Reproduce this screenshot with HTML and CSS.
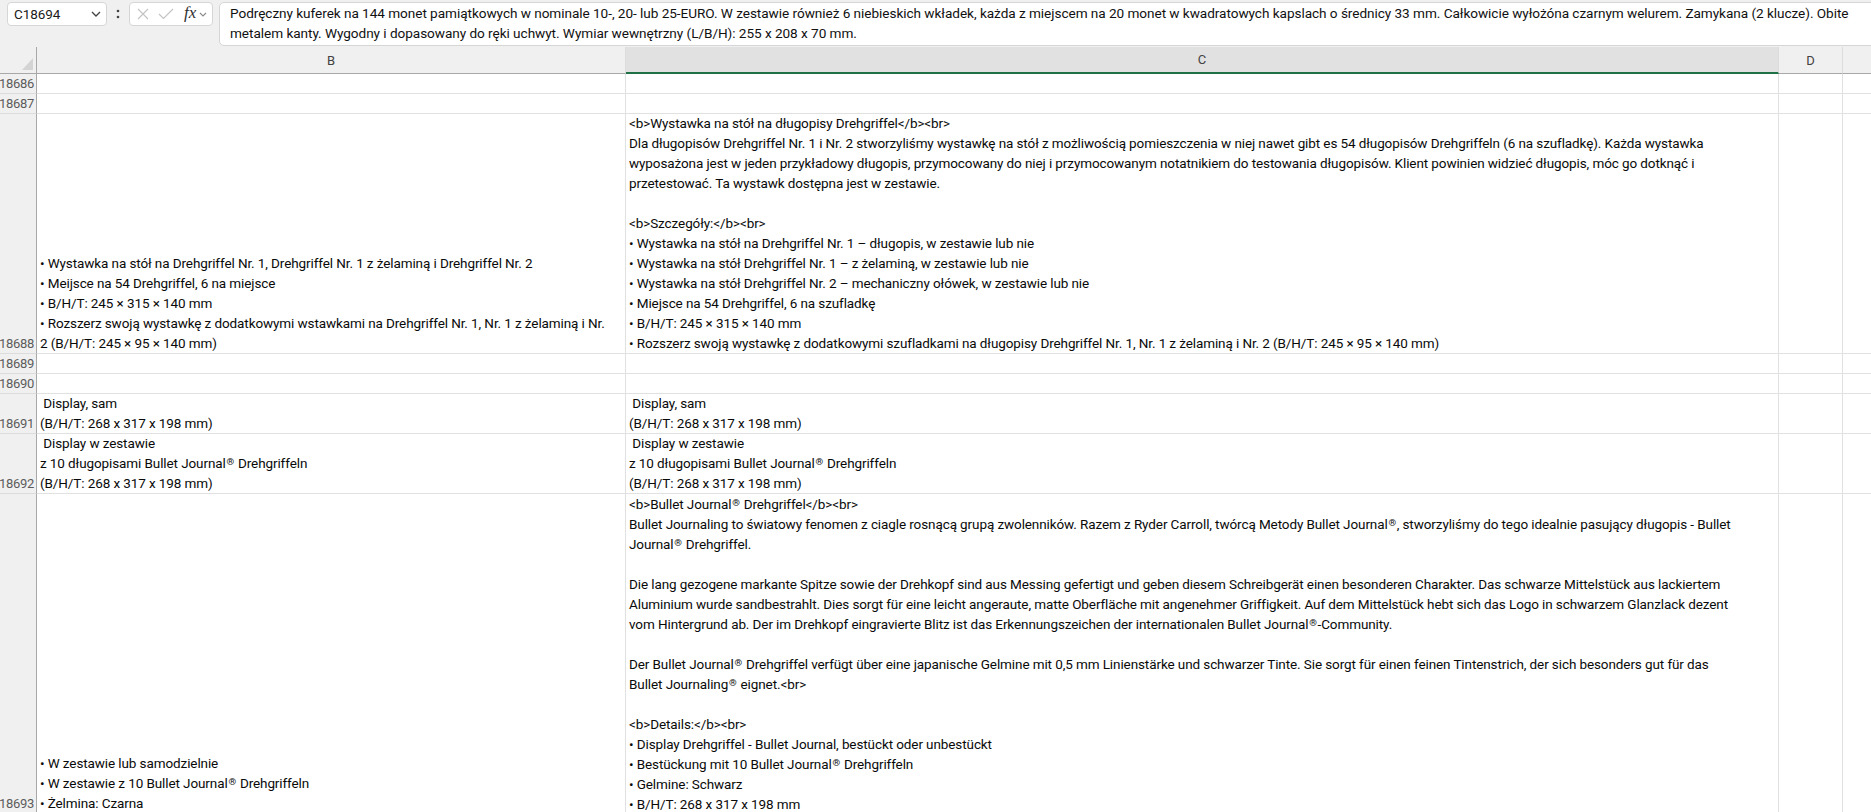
FILE: index.html
```html
<!DOCTYPE html>
<html lang="pl">
<head>
<meta charset="utf-8">
<title>Arkusz</title>
<link rel="stylesheet" href="styles.css">
</head>
<body>
<div class="app">
  <div class="topbar">
    <div class="namebox">
      <span class="nb-text">C18694</span>
      <svg class="nb-chev" width="10" height="6" viewBox="0 0 10 6"><polyline points="1,1 5,5 9,1" fill="none" stroke="#424242" stroke-width="1.3"/></svg>
    </div>
    <div class="splitter">
      <svg width="4" height="14" viewBox="0 0 4 14"><circle cx="2" cy="4" r="1.3" fill="#424242"/><circle cx="2" cy="10" r="1.3" fill="#424242"/></svg>
    </div>
    <div class="fbtns">
      <svg class="ic-x" width="12" height="12" viewBox="0 0 12 12"><path d="M1 1 L11 11 M11 1 L1 11" stroke="#c4c4c4" stroke-width="1.2" fill="none"/></svg>
      <svg class="ic-ok" width="16" height="12" viewBox="0 0 16 12"><polyline points="1,6 5.5,10.5 15,1" fill="none" stroke="#c4c4c4" stroke-width="1.2"/></svg>
      <span class="fx">fx</span>
      <svg class="fx-chev" width="8" height="5" viewBox="0 0 8 5"><polyline points="1,1 4,4 7,1" fill="none" stroke="#8a8a8a" stroke-width="1.1"/></svg>
    </div>
    <div class="formula">
      <div class="fline">Podręczny kuferek na 144 monet pamiątkowych w nominale 10-, 20- lub 25-EURO. W zestawie również 6 niebieskich wkładek, każda z miejscem na 20 monet w kwadratowych kapslach o średnicy 33 mm. Całkowicie wyłożóna czarnym welurem. Zamykana (2 klucze). Obite</div>
      <div class="fline">metalem kanty. Wygodny i dopasowany do ręki uchwyt. Wymiar wewnętrzny (L/B/H): 255 x 208 x 70 mm.</div>
    </div>
  </div>

  <div class="sheet">
    <!-- header row -->
    <div class="corner"><span class="tri"></span></div>
    <div class="ch">B</div>
    <div class="ch ch-sel">C</div>
    <div class="ch">D</div>
    <div class="ch"></div>

    <!-- 18686 -->
    <div class="rh">18686</div>
    <div class="c"></div><div class="c"></div><div class="c"></div><div class="c"></div>

    <!-- 18687 -->
    <div class="rh">18687</div>
    <div class="c"></div><div class="c"></div><div class="c"></div><div class="c"></div>

    <!-- 18688 -->
    <div class="rh">18688</div>
    <div class="c"><div class="t">
      <div class="l">• Wystawka na stół na Drehgriffel Nr. 1, Drehgriffel Nr. 1 z żelaminą i Drehgriffel Nr. 2</div>
      <div class="l">• Meijsce na 54 Drehgriffel, 6 na miejsce</div>
      <div class="l">• B/H/T: 245 × 315 × 140 mm</div>
      <div class="l">• Rozszerz swoją wystawkę z dodatkowymi wstawkami na Drehgriffel Nr. 1, Nr. 1 z żelaminą i Nr.</div>
      <div class="l">2 (B/H/T: 245 × 95 × 140 mm)</div>
    </div></div>
    <div class="c"><div class="t">
      <div class="l">&lt;b&gt;Wystawka na stół na długopisy Drehgriffel&lt;/b&gt;&lt;br&gt;</div>
      <div class="l">Dla długopisów Drehgriffel Nr. 1 i Nr. 2 stworzyliśmy wystawkę na stół z możliwością pomieszczenia w niej nawet gibt es 54 długopisów Drehgriffeln (6 na szufladkę). Każda wystawka</div>
      <div class="l">wyposażona jest w jeden przykładowy długopis, przymocowany do niej i przymocowanym notatnikiem do testowania długopisów. Klient powinien widzieć długopis, móc go dotknąć i</div>
      <div class="l">przetestować. Ta wystawk dostępna jest w zestawie.</div>
      <div class="l e"></div>
      <div class="l">&lt;b&gt;Szczegóły:&lt;/b&gt;&lt;br&gt;</div>
      <div class="l">• Wystawka na stół na Drehgriffel Nr. 1 – długopis, w zestawie lub nie</div>
      <div class="l">• Wystawka na stół Drehgriffel Nr. 1 – z żelaminą, w zestawie lub nie</div>
      <div class="l">• Wystawka na stół Drehgriffel Nr. 2 – mechaniczny ołówek, w zestawie lub nie</div>
      <div class="l">• Miejsce na 54 Drehgriffel, 6 na szufladkę</div>
      <div class="l">• B/H/T: 245 × 315 × 140 mm</div>
      <div class="l">• Rozszerz swoją wystawkę z dodatkowymi szufladkami na długopisy Drehgriffel Nr. 1, Nr. 1 z żelaminą i Nr. 2 (B/H/T: 245 × 95 × 140 mm)</div>
    </div></div>
    <div class="c"></div><div class="c"></div>

    <!-- 18689 -->
    <div class="rh">18689</div>
    <div class="c"></div><div class="c"></div><div class="c"></div><div class="c"></div>

    <!-- 18690 -->
    <div class="rh">18690</div>
    <div class="c"></div><div class="c"></div><div class="c"></div><div class="c"></div>

    <!-- 18691 -->
    <div class="rh">18691</div>
    <div class="c"><div class="t">
      <div class="l"> Display, sam</div>
      <div class="l">(B/H/T: 268 x 317 x 198 mm)</div>
    </div></div>
    <div class="c"><div class="t">
      <div class="l"> Display, sam</div>
      <div class="l">(B/H/T: 268 x 317 x 198 mm)</div>
    </div></div>
    <div class="c"></div><div class="c"></div>

    <!-- 18692 -->
    <div class="rh">18692</div>
    <div class="c"><div class="t">
      <div class="l"> Display w zestawie</div>
      <div class="l">z 10 długopisami Bullet Journal<span class="reg">®</span> Drehgriffeln</div>
      <div class="l">(B/H/T: 268 x 317 x 198 mm)</div>
    </div></div>
    <div class="c"><div class="t">
      <div class="l"> Display w zestawie</div>
      <div class="l">z 10 długopisami Bullet Journal<span class="reg">®</span> Drehgriffeln</div>
      <div class="l">(B/H/T: 268 x 317 x 198 mm)</div>
    </div></div>
    <div class="c"></div><div class="c"></div>

    <!-- 18693 -->
    <div class="rh">18693</div>
    <div class="c"><div class="t">
      <div class="l">• W zestawie lub samodzielnie</div>
      <div class="l">• W zestawie z 10 Bullet Journal<span class="reg">®</span> Drehgriffeln</div>
      <div class="l">• Żelmina: Czarna</div>
    </div></div>
    <div class="c c-top"><div class="t">
      <div class="l">&lt;b&gt;Bullet Journal<span class="reg">®</span> Drehgriffel&lt;/b&gt;&lt;br&gt;</div>
      <div class="l">Bullet Journaling to światowy fenomen z ciagle rosnącą grupą zwolenników. Razem z Ryder Carroll, twórcą Metody Bullet Journal<span class="reg">®</span>, stworzyliśmy do tego idealnie pasujący długopis - Bullet</div>
      <div class="l">Journal<span class="reg">®</span> Drehgriffel.</div>
      <div class="l e"></div>
      <div class="l">Die lang gezogene markante Spitze sowie der Drehkopf sind aus Messing gefertigt und geben diesem Schreibgerät einen besonderen Charakter. Das schwarze Mittelstück aus lackiertem</div>
      <div class="l">Aluminium wurde sandbestrahlt. Dies sorgt für eine leicht angeraute, matte Oberfläche mit angenehmer Griffigkeit. Auf dem Mittelstück hebt sich das Logo in schwarzem Glanzlack dezent</div>
      <div class="l">vom Hintergrund ab. Der im Drehkopf eingravierte Blitz ist das Erkennungszeichen der internationalen Bullet Journal<span class="reg">®</span>-Community.</div>
      <div class="l e"></div>
      <div class="l">Der Bullet Journal<span class="reg">®</span> Drehgriffel verfügt über eine japanische Gelmine mit 0,5 mm Linienstärke und schwarzer Tinte. Sie sorgt für einen feinen Tintenstrich, der sich besonders gut für das</div>
      <div class="l">Bullet Journaling<span class="reg">®</span> eignet.&lt;br&gt;</div>
      <div class="l e"></div>
      <div class="l">&lt;b&gt;Details:&lt;/b&gt;&lt;br&gt;</div>
      <div class="l">• Display Drehgriffel - Bullet Journal, bestückt oder unbestückt</div>
      <div class="l">• Bestückung mit 10 Bullet Journal<span class="reg">®</span> Drehgriffeln</div>
      <div class="l">• Gelmine: Schwarz</div>
      <div class="l">• B/H/T: 268 x 317 x 198 mm</div>
    </div></div>
    <div class="c"></div><div class="c"></div>
  </div>
</div>
</body>
</html>
```

FILE: styles.css
```css
html, body {
  margin: 0;
  padding: 0;
}
body {
  width: 1871px;
  height: 812px;
  overflow: hidden;
  background: #ffffff;
  font-family: Roboto, "Liberation Sans", sans-serif;
  color: #242424;
}
.app {
  width: 1871px;
  height: 812px;
  overflow: hidden;
}

/* ---------- formula bar ---------- */
.topbar {
  height: 47px;
  box-sizing: border-box;
  background: #f0f0f0;
  display: flex;
  align-items: flex-start;
  padding: 2px 0 0 7px;
}
.topbar > * {
  flex-shrink: 0;
}
.namebox {
  width: 100px;
  height: 24px;
  box-sizing: border-box;
  background: #fff;
  border: 1px solid #d6d6d6;
  border-radius: 4px;
  display: flex;
  align-items: center;
  justify-content: space-between;
  padding: 0 5px 0 6px;
  font-size: 13.5px;
  letter-spacing: -0.1px;
  color: #1a1a1a;
}
.nb-chev { display: block; }
.splitter {
  width: 22px;
  height: 24px;
  display: flex;
  align-items: center;
  justify-content: center;
}
.fbtns {
  width: 84px;
  height: 24px;
  box-sizing: border-box;
  background: #fff;
  border: 1px solid #d6d6d6;
  border-radius: 4px;
  display: flex;
  align-items: center;
  padding-left: 7px;
}
.ic-x { margin-right: 9px; flex-shrink: 0; }
.ic-ok { margin-right: 10px; flex-shrink: 0; }
.fx {
  font-family: "Liberation Serif", serif;
  font-style: italic;
  font-size: 17px;
  color: #303030;
  line-height: 20px;
  margin-right: 3px;
  margin-top: -2px;
}
.formula {
  margin-left: 6px;
  width: 1700px;
  height: 44px;
  box-sizing: border-box;
  background: #fff;
  border: 1px solid #d6d6d6;
  border-radius: 5px;
  padding: 1px 10px 0 10px;
  font-size: 13.6px;
  letter-spacing: -0.05px;
  line-height: 19.5px;
  color: #111;
}
.fline { white-space: nowrap; }

/* ---------- sheet grid ---------- */
.sheet {
  display: grid;
  grid-template-columns: 37px 589px 1153px 64px 200px;
  grid-template-rows: 27px 20px 20px 240px 20px 20px 40px 60px 320px;
  font-size: 13.5px;
  letter-spacing: -0.1px;
  line-height: 20px;
}
.corner {
  background: #f0f0f0;
  border-right: 1px solid #a8a8a8;
  border-bottom: 1px solid #a8a8a8;
  position: relative;
}
.tri {
  position: absolute;
  right: 3px;
  bottom: 3px;
  width: 0;
  height: 0;
  border-left: 11px solid transparent;
  border-bottom: 12px solid #d4d4d4;
}
.ch {
  background: #f0f0f0;
  border-right: 1px solid #dcdcdc;
  border-bottom: 1px solid #a8a8a8;
  display: flex;
  align-items: center;
  justify-content: center;
  font-size: 13px;
  color: #424242;
  padding-top: 1px;
}
.ch-sel {
  background: #e1e1e1;
  border-bottom: 2px solid #1e7145;
}
.rh {
  background: #f0f0f0;
  border-right: 1px solid #a8a8a8;
  border-bottom: 1px solid #dcdcdc;
  display: flex;
  align-items: flex-end;
  justify-content: flex-end;
  padding-right: 2px;
  font-size: 13px;
  letter-spacing: -0.3px;
  color: #5c5c5c;
  line-height: 19px;
  overflow: hidden;
}
.c {
  border-right: 1px solid #e1e1e1;
  border-bottom: 1px solid #e1e1e1;
  overflow: hidden;
  display: flex;
  flex-direction: column;
  justify-content: flex-end;
  padding-left: 3px;
  min-width: 0;
  min-height: 0;
}
.c-top { justify-content: flex-start; }
.t {
  color: #0a0a0a;
  flex: none;
}
.l {
  white-space: pre;
  height: 20px;
}
.reg {
  font-size: 0.72em;
  letter-spacing: 0;
  vertical-align: 0.35em;
  line-height: 0;
  margin: 0 0.6px 0 0.8px;
}
```
